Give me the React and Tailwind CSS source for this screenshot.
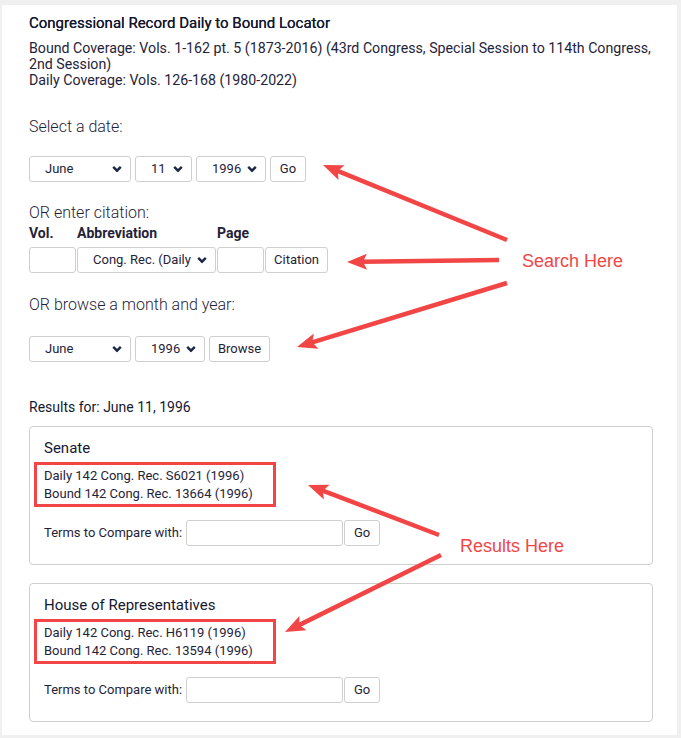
import React from "react";

const TEXT = "text-[#1f2339]";

const Chevron = () => (
  <svg
    width="10"
    height="7"
    viewBox="0 0 10 7"
    className="pointer-events-none absolute right-[9px] top-1/2 -translate-y-1/2"
  >
    <polyline points="1.2,1.4 5,5.2 8.8,1.4" fill="none" stroke="#1c2745" strokeWidth="2.4" />
  </svg>
);

const Select = ({ value, width }) => (
  <div className={`relative inline-block ${width}`}>
    <select
      defaultValue={value}
      className={`h-[26px] w-full appearance-none rounded-[3px] border border-[#cfcfcf] bg-white pl-[15px] pr-6 text-[13px] ${TEXT} outline-none`}
    >
      <option>{value}</option>
    </select>
    <Chevron />
  </div>
);

const Button = ({ children, width }) => (
  <button
    className={`h-[26px] ${width} rounded-[3px] border border-[#cfcfcf] bg-white text-[13px] ${TEXT}`}
  >
    {children}
  </button>
);

const Input = ({ width }) => (
  <input
    type="text"
    className={`h-[26px] ${width} rounded-[3px] border border-[#cfcfcf] bg-white outline-none`}
  />
);

const ResultBox = ({ title, daily, bound, className }) => (
  <div className={`w-[624px] rounded-[4px] border border-[#cfcfcf] pl-[14px] pt-[11px] pb-[18px] ${className}`}>
    <div className="text-[15px] leading-[20px] text-[#141830]">{title}</div>

    {/* highlighted citations */}
    <div className="-ml-[10px] mt-[4px] w-[242px] border-[3px] border-[#f24646] pl-[7px] pt-[2px] pb-[2px] text-[13px] leading-[17.5px]">
      <div>{daily}</div>
      <div>{bound}</div>
    </div>

    <div className="mt-[13px] flex items-center text-[13px]">
      <span className="mr-[4px]">Terms to Compare with:</span>
      <Input width="w-[157px]" />
      <Button width="ml-[1px] w-[36px]">Go</Button>
    </div>
  </div>
);

const Arrow = ({ x1, y1, x2, y2 }) => {
  const dx = x2 - x1;
  const dy = y2 - y1;
  const len = Math.sqrt(dx * dx + dy * dy);
  const ux = dx / len;
  const uy = dy / len;
  const headLen = 20;
  const half = 8;
  const bx = x2 - ux * headLen;
  const by = y2 - uy * headLen;
  const pts = [
    `${x2},${y2}`,
    `${bx - uy * half},${by + ux * half}`,
    `${bx + ux * 4},${by + uy * 4}`,
    `${bx + uy * half},${by - ux * half}`
  ].join(" ");

  return (
    <g>
      <line x1={x1} y1={y1} x2={bx + ux * 5} y2={by + uy * 5} stroke="#f24646" strokeWidth="4.5" />
      <polygon points={pts} fill="#f24646" />
    </g>
  );
};

export default function App() {
  return (
    <div className={`relative min-h-[738px] w-[681px] bg-[#f0f0f0] pl-[2px] pt-[5px] font-['Roboto',sans-serif] ${TEXT}`}>
      <div className="h-[730px] w-[675px] bg-white pl-[27px] pt-[8px]">

        {/* HEADER */}
        <div className="text-[15px] leading-[20px] text-[#141830] [text-shadow:0_0_0.3px_#141830]">
          Congressional Record Daily to Bound Locator
        </div>
        <div className="mt-[7px] text-[14.2px] leading-[16px]">
          <div>Bound Coverage: Vols. 1-162 pt. 5 (1873-2016) (43rd Congress, Special Session to 114th Congress,</div>
          <div>2nd Session)</div>
          <div>Daily Coverage: Vols. 126-168 (1980-2022)</div>
        </div>

        {/* DATE */}
        <div className="mt-[29px] text-[16px] font-light leading-[20px]">Select a date:</div>
        <div className="mt-[19px] flex gap-[4px]">
          <Select value="June" width="w-[102px]" />
          <Select value="11" width="w-[57px]" />
          <Select value="1996" width="w-[70px]" />
          <Button width="w-[36px]">Go</Button>
        </div>

        {/* CITATION */}
        <div className="mt-[21px] text-[16px] font-light leading-[20px]">OR enter citation:</div>
        <div className="mt-[1px] grid grid-cols-[48px_140px_48px_auto] text-[14px] font-bold leading-[18px]">
          <div>Vol.</div>
          <div>Abbreviation</div>
          <div>Page</div>
          <div />
        </div>
        <div className="mt-[5px] grid grid-cols-[48px_140px_48px_auto]">
          <Input width="w-[47px]" />
          <Select value="Cong. Rec. (Daily Edition)" width="w-[139px]" />
          <Input width="w-[47px]" />
          <Button width="w-[63px]">Citation</Button>
        </div>

        {/* BROWSE */}
        <div className="mt-[22px] text-[16px] font-light leading-[20px]">OR browse a month and year:</div>
        <div className="mt-[21px] flex gap-[4px]">
          <Select value="June" width="w-[102px]" />
          <Select value="1996" width="w-[70px]" />
          <Button width="w-[61px]">Browse</Button>
        </div>

        {/* RESULTS */}
        <div className="mt-[36px] text-[14px] leading-[18px] text-[#141830]">Results for: June 11, 1996</div>
        <ResultBox
          className="mt-[10px]"
          title="Senate"
          daily="Daily 142 Cong. Rec. S6021 (1996)"
          bound="Bound 142 Cong. Rec. 13664 (1996)"
        />
        <ResultBox
          className="mt-[18px]"
          title="House of Representatives"
          daily="Daily 142 Cong. Rec. H6119 (1996)"
          bound="Bound 142 Cong. Rec. 13594 (1996)"
        />
      </div>

      {/* ANNOTATIONS */}
      <svg className="pointer-events-none absolute left-0 top-0" width="681" height="738">
        <Arrow x1={507} y1={240} x2={323} y2={165} />
        <Arrow x1={499} y1={260} x2={347} y2={262} />
        <Arrow x1={507} y1={283} x2={297} y2={347} />
        <Arrow x1={439} y1={535} x2={308} y2={485} />
        <Arrow x1={441} y1={555} x2={285} y2={632} />
      </svg>
      <div className="pointer-events-none absolute left-[522px] top-[250px] font-['Liberation_Sans',sans-serif] text-[18px] leading-[22px] text-[#f24646]">
        Search Here
      </div>
      <div className="pointer-events-none absolute left-[460px] top-[535px] font-['Liberation_Sans',sans-serif] text-[18px] leading-[22px] text-[#f24646]">
        Results Here
      </div>
    </div>
  );
}
